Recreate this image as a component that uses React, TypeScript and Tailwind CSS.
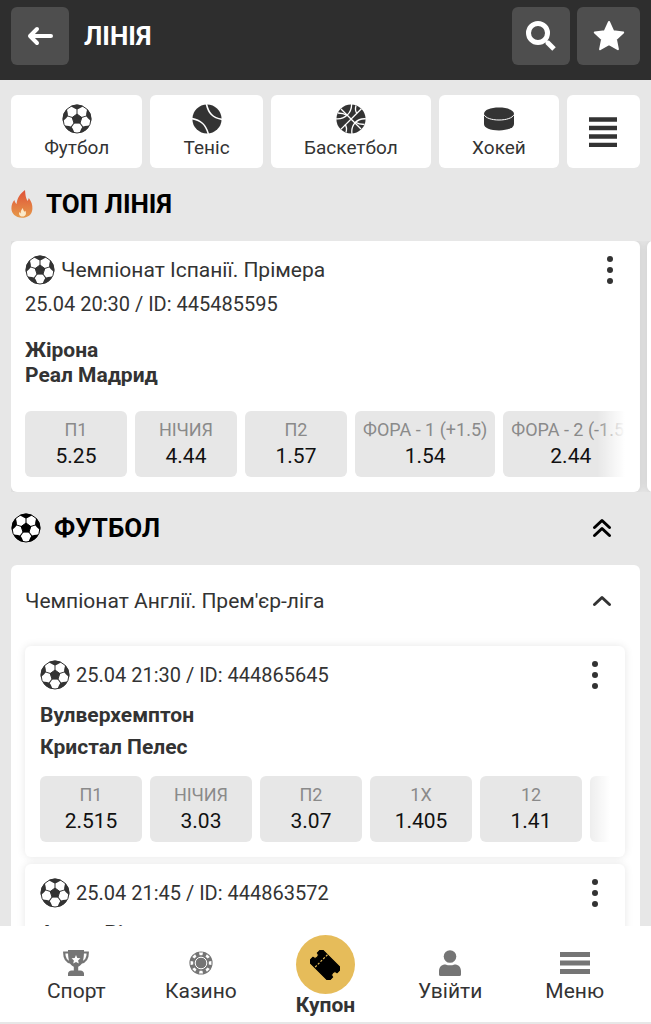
import { ReactNode } from "react";

type Odd = {
    label: string;
    value: string;
};

type Match = {
    date: string;
    id: string;
    home: string;
    away: string;
    odds: Odd[];
};

const topMatch: Match = {
    date: "25.04 20:30",
    id: "445485595",
    home: "Жірона",
    away: "Реал Мадрид",
    odds: [
        { label: "П1", value: "5.25" },
        { label: "НІЧИЯ", value: "4.44" },
        { label: "П2", value: "1.57" },
        { label: "ФОРА - 1 (+1.5)", value: "1.54" },
        { label: "ФОРА - 2 (-1.5)", value: "2.44" },
    ],
};

const matches: Match[] = [
    {
        date: "25.04 21:30",
        id: "444865645",
        home: "Вулверхемптон",
        away: "Кристал Пелес",
        odds: [
            { label: "П1", value: "2.515" },
            { label: "НІЧИЯ", value: "3.03" },
            { label: "П2", value: "3.07" },
            { label: "1X", value: "1.405" },
            { label: "12", value: "1.41" },
            { label: "X2", value: "1.53" },
        ],
    },
    {
        date: "25.04 21:45",
        id: "444863572",
        home: "Астон Вілла",
        away: "Фулхем",
        odds: [
            { label: "П1", value: "1.65" },
            { label: "НІЧИЯ", value: "3.95" },
            { label: "П2", value: "5.3" },
        ],
    },
];

const SoccerIcon = ({ className = "text-[#333]" }: { className?: string }) => (
    <svg viewBox="0 0 30 30" className={"size-[30px] shrink-0 " + className} aria-hidden="true">
        <circle cx="15" cy="15" r="14" fill="#fff" stroke="currentColor" strokeWidth="1" />
        <path d="M15 10 19.800 13.500 18 19.100H12L10.200 13.500Z" fill="currentColor" stroke="currentColor" strokeLinejoin="round" />
        {[0, 72, 144, 216, 288].map((angle) => (
            <g key={angle} transform={`rotate(${angle} 15 15)`}>
                <path d="M8.6 2.2A14.3 14.3 0 0 1 21.4 2.2L17.3 4.6 15 5.4 12.7 4.6Z" fill="currentColor" />
                <path d="M15 4V11" stroke="currentColor" strokeWidth="1" />
            </g>
        ))}
    </svg>
);

const TennisIcon = () => (
    <svg viewBox="0 0 30 30" className="size-[30px]" aria-hidden="true">
        <circle cx="15" cy="15" r="14.6" fill="#333" />
        <path d="M14.4 0C16.5 9 20.5 14 30 15.4M0 14.6C9.5 16 13.8 21 16.4 30" fill="none" stroke="#fff" strokeWidth="1.6" />
    </svg>
);

const BasketballIcon = () => (
    <svg viewBox="0 0 30 30" className="size-[30px]" aria-hidden="true">
        <circle cx="15" cy="15" r="14.6" fill="#333" />
        <g fill="none" stroke="#fff" strokeWidth="1.3">
            <path d="M5 5 25 25M25.4 4.8 4.8 25.4" />
            <path d="M15.6 0C15.8 9 9 15.6 0 14.8M30 14.8C21 14 14.6 21 16 30" />
            <path d="M2 9C5 9 8 9.500 11.500 11.500M20 1.500C19 5 19 7 21 9.500M28.500 20.500C25 20.500 22 20 19 18M10 28.500C11 25 11 23 9 20.500" />
        </g>
    </svg>
);

const PuckIcon = () => (
    <svg viewBox="0 0 32 30" className="h-[30px] w-8" aria-hidden="true">
        <path d="M1 10C1 6 7.5 3.6 16 3.6S31 6 31 10V20C31 24 24.5 26.4 16 26.4S1 24 1 20Z" fill="#333" />
        <path d="M1 10.6C2.5 14 8.5 16 16 16S29.500 14 31 10.600" fill="none" stroke="#fff" strokeWidth="1" />
    </svg>
);

const FlameIcon = () => (
    <svg viewBox="0 0 22 30" className="h-[30px] w-[22px]" aria-hidden="true">
        <defs>
            <linearGradient id="flame" x1="0" y1="0" x2="0" y2="1">
                <stop offset="0" stopColor="#df5138" />
                <stop offset="1" stopColor="#e69a4a" />
            </linearGradient>
        </defs>
        <path
            d="M14 1C14.500 6 14.500 8 16.500 12 17.200 11.200 17.500 10 17.800 9 20.500 12.500 21.600 16 21.400 20 21 26 16.500 28.800 11 28.800 4.500 28.800.400 24.500.400 19.600.400 16 1.500 13 3.400 11 3.800 12.800 4.400 14 5.600 15C6 9.500 9 4.500 14 1Z"
            fill="url(#flame)"
        />
        <path d="M11.800 19C12 20.500 12.600 21.600 13.400 22.800L14.400 21.800C15.800 25 14.600 27.600 11.600 27.600 8.600 27.600 7.600 25.500 8.200 23L9.600 24.400C9.600 22.500 10.400 20.600 11.800 19Z" fill="#fbe9c8" />
    </svg>
);

const TrophyIcon = () => (
    <svg viewBox="0 0 26 26" className="size-[26px]" aria-hidden="true">
        <path d="M6 2.500H1.200C1.200 8.500 3 11.800 8 12.600M20 2.500H24.800C24.800 8.500 23 11.800 18 12.600" fill="none" stroke="#757575" strokeWidth="2.200" />
        <path d="M5 0H21C21 8.500 20.200 14.500 15.200 16.800V20.500H17.500C19.500 20.500 21 22 21 23.600V26H5V23.600C5 22 6.500 20.500 8.500 20.500H10.800V16.800C5.800 14.500 5 8.500 5 0Z" fill="#757575" />
        <path d="M13 5 14.300 8 17.400 8.300 15.100 10.400 15.800 13.500 13 11.900 10.200 13.500 10.900 10.400 8.600 8.300 11.700 8Z" fill="#fff" />
    </svg>
);

const ChipIcon = () => (
    <svg viewBox="0 0 24 24" className="size-6" aria-hidden="true">
        <circle cx="12" cy="12" r="11.600" fill="#757575" />
        {[0, 45, 90, 135, 180, 225, 270, 315].map((angle) => (
            <path key={angle} d="M10 1.600H14L13.400 4.200H10.600Z" fill="#fff" transform={`rotate(${angle} 12 12)`} />
        ))}
        <circle cx="12" cy="12" r="5.800" fill="none" stroke="#fff" strokeWidth="1" />
    </svg>
);

const TicketIcon = () => (
    <svg viewBox="0 0 30 30" className="size-[30px]" aria-hidden="true">
        <g transform="rotate(45 15 15)">
            <path d="M1 6H29V12A3 3 0 0 0 29 18V24H1V18A3 3 0 0 0 1 12Z" fill="#000" stroke="#000" strokeLinejoin="round" />
            <path d="M9.500 6V24" stroke="#e6bc5a" strokeWidth="1.200" strokeDasharray="2.200 1.600" />
        </g>
    </svg>
);

const UserIcon = () => (
    <svg viewBox="0 0 22 26" className="h-[26px] w-[22px]" aria-hidden="true">
        <circle cx="11" cy="6.500" r="6.300" fill="#757575" />
        <path d="M0 24.500V21C0 17 2.500 14.400 6.500 14.400 9.500 15.600 12.500 15.600 15.500 14.400 19.500 14.400 22 17 22 21V24.500Q22 26 20.500 26H1.500Q0 26 0 24.500Z" fill="#757575" />
    </svg>
);

const BurgerIcon = () => (
    <svg viewBox="0 0 30 26" className="h-[26px] w-[30px]" aria-hidden="true">
        <path d="M0 4.500H30M0 13H30M0 21.500H30" stroke="#757575" strokeWidth="5" />
    </svg>
);

const MoreButton = () => (
    <button className="flex h-[30px] w-[30px] shrink-0 items-center justify-center" aria-label="Ще">
        <svg viewBox="0 0 6 30" className="h-[30px] w-[6px]" fill="#333" aria-hidden="true">
            <circle cx="3" cy="4" r="3" />
            <circle cx="3" cy="15" r="3" />
            <circle cx="3" cy="26" r="3" />
        </svg>
    </button>
);

const Odds = ({ odds }: { odds: Odd[] }) => (
    <div className="relative overflow-hidden">
        <div className="flex gap-2">
            {odds.map((odd) => (
                <button key={odd.label} className="flex h-[66px] min-w-[102px] shrink-0 flex-col items-center rounded-md bg-[#e7e7e7] px-2 pt-[7px]">
                    <span className="text-lg leading-6 whitespace-nowrap text-[#8a8a8a]">{odd.label}</span>
                    <span className="text-[21px] leading-7 text-[#111]">{odd.value}</span>
                </button>
            ))}
        </div>
        <div className="pointer-events-none absolute inset-y-0 right-0 w-7 bg-linear-to-r from-white/0 to-white" />
    </div>
);

const MatchCard = ({ match }: { match: Match }) => (
    <article className="rounded-md bg-white p-[15px] pt-[14px] shadow-[0_0_8px_rgba(0,0,0,0.1)]">
        <div className="flex items-center">
            <SoccerIcon />
            <span className="ml-[6px] flex-1 text-xl leading-[30px]">
                {match.date} / ID: {match.id}
            </span>
            <MoreButton />
        </div>
        <div className="mt-[9px] mb-[13px] text-[21px] leading-8 font-bold">
            <div>{match.home}</div>
            <div>{match.away}</div>
        </div>
        <Odds odds={match.odds} />
    </article>
);

const Category = ({ icon, title }: { icon: ReactNode; title: string }) => (
    <button className="flex h-[73px] flex-auto flex-col items-center rounded-md bg-white pt-[9px]">
        {icon}
        <span className="text-[19px] leading-7">{title}</span>
    </button>
);

const NavItem = ({ icon, title }: { icon: ReactNode; title: string }) => (
    <a href="#" className="flex flex-col items-center pt-6">
        <span className="flex h-[26px] items-center">{icon}</span>
        <span className="mt-px text-[21px] leading-7">{title}</span>
    </a>
);

const App = () => {
    return (
        <div className="flex h-screen flex-col overflow-hidden bg-[#e7e7e7] font-[Roboto,sans-serif] text-[#333]">
            <header className="flex shrink-0 items-center bg-[#2e2e2e] px-[11px] pt-[7px] pb-[15px] text-white">
                <button className="flex size-[58px] items-center justify-center rounded-md bg-[#4e4e4e]" aria-label="Назад">
                    <svg viewBox="0 0 26 20" className="h-5 w-[26px]" fill="none" stroke="currentColor" strokeWidth="4" strokeLinecap="round" strokeLinejoin="round" aria-hidden="true">
                        <path d="M24 10H3M10 3 3 10 10 17" />
                    </svg>
                </button>
                <h1 className="ml-[15px] flex-1 text-[26px] leading-8 font-bold">ЛІНІЯ</h1>
                <button className="flex size-[58px] items-center justify-center rounded-md bg-[#4e4e4e]" aria-label="Пошук">
                    <svg viewBox="0 0 30 30" className="size-[30px]" fill="none" stroke="currentColor" aria-hidden="true">
                        <circle cx="12" cy="12" r="9.500" strokeWidth="5" />
                        <path d="M18.500 18.500 21.500 21.500" strokeWidth="3" />
                        <path d="M21 21 28 28" strokeWidth="5" />
                    </svg>
                </button>
                <button className="ml-[7px] flex h-[58px] w-[63px] items-center justify-center rounded-md bg-[#4e4e4e]" aria-label="Обране">
                    <svg viewBox="0 0 32 32" className="size-8" fill="currentColor" stroke="currentColor" strokeWidth="2" strokeLinejoin="round" aria-hidden="true">
                        <path d="M16 2 20.300 11.300 30.200 12.400 22.900 19.200 24.900 29.200 16 24.200 7.100 29.200 9.100 19.200 1.800 12.400 11.700 11.300Z" />
                    </svg>
                </button>
            </header>

            <main className="min-h-0 flex-1 overflow-y-auto px-[11px] pt-[15px] [scrollbar-width:none]">
                <div className="flex gap-2">
                    <Category icon={<SoccerIcon />} title="Футбол" />
                    <Category icon={<TennisIcon />} title="Теніс" />
                    <Category icon={<BasketballIcon />} title="Баскетбол" />
                    <Category icon={<PuckIcon />} title="Хокей" />
                    <button className="flex h-[73px] w-[73px] shrink-0 items-center justify-center rounded-md bg-white" aria-label="Усі види спорту">
                        <svg viewBox="0 0 30 30" className="size-[30px]" aria-hidden="true">
                            <path d="M0 2.500H28M0 11H28M0 19.500H28M0 28H28" stroke="#333" strokeWidth="4.500" />
                        </svg>
                    </button>
                </div>

                <div className="flex h-[73px] items-center gap-[13px] pb-0.5">
                    <FlameIcon />
                    <h2 className="text-[26px] leading-8 font-bold text-black">ТОП ЛІНІЯ</h2>
                </div>

                <div className="-mr-[11px] flex gap-[7px] overflow-hidden">
                    <article className="w-[calc(100%-11px)] shrink-0 rounded-md bg-white p-[15px] pt-[14px] pl-[14px] shadow-[0_0_8px_rgba(0,0,0,0.12)]">
                        <div className="flex items-center">
                            <SoccerIcon />
                            <span className="ml-[6px] flex-1 text-[21px] leading-[30px]">Чемпіонат Іспанії. Прімера</span>
                            <MoreButton />
                        </div>
                        <div className="mt-1 text-xl leading-[30px]">
                            {topMatch.date} / ID: {topMatch.id}
                        </div>
                        <div className="mt-[19px] mb-[23px] text-[21px] leading-[25px] font-bold">
                            <div>{topMatch.home}</div>
                            <div>{topMatch.away}</div>
                        </div>
                        <Odds odds={topMatch.odds} />
                    </article>
                    <article className="w-[calc(100%-11px)] shrink-0 rounded-md bg-white shadow-[0_0_8px_rgba(0,0,0,0.12)]" />
                </div>

                <div className="flex h-[73px] items-center pb-0.5">
                    <SoccerIcon className="text-black" />
                    <h2 className="ml-[13px] flex-1 text-[26px] leading-8 font-bold text-black">ФУТБОЛ</h2>
                    <button className="mr-[28px] flex w-5 justify-center" aria-label="Згорнути футбол">
                        <svg viewBox="0 0 20 20" className="size-5" fill="none" stroke="#000" strokeWidth="3" strokeLinecap="round" strokeLinejoin="round" aria-hidden="true">
                            <path d="M2.500 9.500 10 2.500 17.500 9.500M2.500 17.500 10 10.500 17.500 17.500" />
                        </svg>
                    </button>
                </div>

                <section className="rounded-md bg-white px-[15px] pb-[15px] pl-[14px]">
                    <div className="flex h-[81px] items-center pb-[9px]">
                        <h3 className="flex-1 text-[21px] leading-[30px]">Чемпіонат Англії. Прем'єр-ліга</h3>
                        <button className="mr-[13px] flex w-5 justify-center" aria-label="Згорнути чемпіонат">
                            <svg viewBox="0 0 20 12" className="h-3 w-5" fill="none" stroke="#333" strokeWidth="3" strokeLinecap="round" strokeLinejoin="round" aria-hidden="true">
                                <path d="M2.500 9.500 10 2.500 17.500 9.500" />
                            </svg>
                        </button>
                    </div>
                    <div className="flex flex-col gap-[7px]">
                        {matches.map((match) => (
                            <MatchCard key={match.id} match={match} />
                        ))}
                    </div>
                </section>
            </main>

            <nav className="grid h-[98px] shrink-0 grid-cols-5 border-b-2 border-[#e7e7e7] bg-white px-[14px]">
                <NavItem icon={<TrophyIcon />} title="Спорт" />
                <NavItem icon={<ChipIcon />} title="Казино" />
                <a href="#" className="flex flex-col items-center pt-[9px]">
                    <span className="flex size-[59px] shrink-0 items-center justify-center rounded-full bg-[#e6bc5a]">
                        <TicketIcon />
                    </span>
                    <span className="text-[21px] leading-[22px] font-bold">Купон</span>
                </a>
                <NavItem icon={<UserIcon />} title="Увійти" />
                <NavItem icon={<BurgerIcon />} title="Меню" />
            </nav>
        </div>
    );
};

export default App;
